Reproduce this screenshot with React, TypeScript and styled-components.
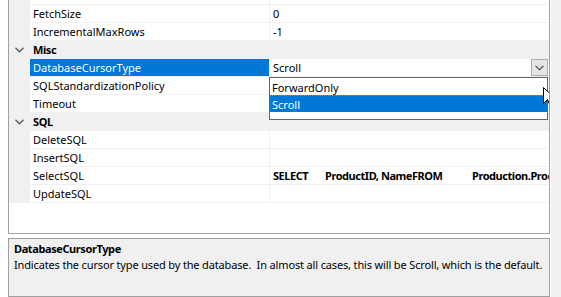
import React from 'react';
import styled, { createGlobalStyle } from 'styled-components';

const GlobalStyle = createGlobalStyle`
  html, body {
    margin: 0;
    padding: 0;
    background: #ffffff;
  }
  body {
    font-family: 'Noto Sans', 'Open Sans', sans-serif;
    font-size: 11px;
    letter-spacing: 0;
    color: #000000;
  }
`;

const Window = styled.div`
  display: flex;
  width: 561px;
  height: 297px;
  overflow: hidden;
  background: #ffffff;
`;

const Content = styled.div`
  display: flex;
  flex-direction: column;
  width: 542px;
  margin-left: 8px;
`;

const RightStrip = styled.div`
  flex: 1;
  margin-left: 1px;
  background: #f0f0f0;
`;

const Grid = styled.div`
  position: relative;
  height: 233px;
  border: 1px solid #a0a0a0;
  border-top: none;
  background: #ffffff;
  overflow: hidden;
`;

const Row = styled.div<{ $category?: boolean; $height?: number }>`
  display: grid;
  grid-template-columns: 21px 240px 1fr;
  height: ${(p) => p.$height ?? 17}px;
  border-bottom: 1px solid #f0f0f0;
  background: ${(p) => (p.$category ? '#f0f0f0' : '#ffffff')};
  line-height: 17px;
`;

const Margin = styled.div`
  display: flex;
  align-items: center;
  justify-content: center;
  background: #f0f0f0;
`;

const NameCell = styled.div<{ $selected?: boolean; $bold?: boolean }>`
  padding-left: 3px;
  white-space: nowrap;
  overflow: hidden;
  font-weight: ${(p) => (p.$bold ? 700 : 400)};
  letter-spacing: ${(p) => (p.$bold ? '-0.4px' : '0')};
  background: ${(p) => (p.$selected ? '#0078d7' : 'transparent')};
  color: ${(p) => (p.$selected ? '#ffffff' : '#000000')};
  border-right: 1px solid ${(p) => (p.$bold ? 'transparent' : '#f0f0f0')};
`;

const ValueCell = styled.div<{ $bold?: boolean }>`
  position: relative;
  display: flex;
  align-items: center;
  padding-left: 3px;
  white-space: pre;
  font-weight: ${(p) => (p.$bold ? 700 : 400)};
  letter-spacing: ${(p) => (p.$bold ? '-0.45px' : '0')};
  min-width: 0;
`;

const ValueText = styled.span`
  flex: 1;
  overflow: hidden;
`;

const DropButton = styled.div`
  display: flex;
  align-items: center;
  justify-content: center;
  width: 15px;
  height: 15px;
  margin-right: 1px;
  background: #e5e5e5;
  border: 1px solid #adadad;
`;

const Popup = styled.div`
  position: absolute;
  top: 18px;
  left: -1px;
  right: 1px;
  height: 41px;
  border: 1px solid #646464;
  background: #ffffff;
  z-index: 2;
`;

const PopupItem = styled.div<{ $selected?: boolean }>`
  height: 17px;
  line-height: 17px;
  padding-left: 2px;
  background: ${(p) => (p.$selected ? '#0078d7' : '#ffffff')};
  color: ${(p) => (p.$selected ? '#ffffff' : '#000000')};
  border-top: 1px dotted ${(p) => (p.$selected ? '#c08040' : 'transparent')};
  box-sizing: border-box;
`;

const SqlPart = styled.span<{ $width?: number }>`
  display: inline-block;
  width: ${(p) => (p.$width ? `${p.$width}px` : 'auto')};
`;

const Cursor = styled.svg`
  position: absolute;
  left: 534px;
  top: 87px;
  z-index: 3;
`;

const Description = styled.div`
  margin-top: 4px;
  height: 55px;
  border: 1px solid #a0a0a0;
  background: #f0f0f0;
  padding: 2px 5px 0;
  line-height: 16px;
  white-space: pre-wrap;
  letter-spacing: -0.15px;
`;

const DescTitle = styled.div`
  font-weight: 700;
  letter-spacing: -0.4px;
`;

const Chevron = () => (
  <svg width="9" height="6" viewBox="0 0 9 6">
    <path d="M0.5 0.8 L4.5 4.8 L8.5 0.8" fill="none" stroke="#5a5a5a" strokeWidth="1.3" />
  </svg>
);

interface Prop {
  name: string;
  value?: React.ReactNode;
  bold?: boolean;
}

const PropRow: React.FC<Prop> = ({ name, value, bold }) => (
  <Row>
    <Margin />
    <NameCell>{name}</NameCell>
    <ValueCell $bold={bold}>{value}</ValueCell>
  </Row>
);

const CategoryRow: React.FC<{ title: string }> = ({ title }) => (
  <Row $category>
    <Margin>
      <Chevron />
    </Margin>
    <NameCell $bold>{title}</NameCell>
    <div />
  </Row>
);

const App: React.FC = () => {
  return (
    <Window>
      <GlobalStyle />
      <Content>
        <Grid>
          <Row $height={4}>
            <Margin />
            <NameCell />
            <div />
          </Row>
          <PropRow name="FetchSize" value="0" />
          <PropRow name="IncrementalMaxRows" value="-1" />
          <CategoryRow title="Misc" />
          <Row>
            <Margin />
            <NameCell $selected>DatabaseCursorType</NameCell>
            <ValueCell>
              <ValueText>Scroll</ValueText>
              <DropButton>
                <svg width="9" height="6" viewBox="0 0 9 6">
                  <path d="M0.5 0.8 L4.5 4.8 L8.5 0.8" fill="none" stroke="#404040" strokeWidth="1.1" />
                </svg>
              </DropButton>
              <Popup>
                <PopupItem>ForwardOnly</PopupItem>
                <PopupItem $selected>Scroll</PopupItem>
              </Popup>
            </ValueCell>
          </Row>
          <PropRow name="SQLStandardizationPolicy" />
          <PropRow name="Timeout" />
          <CategoryRow title="SQL" />
          <PropRow name="DeleteSQL" />
          <PropRow name="InsertSQL" />
          <PropRow
            name="SelectSQL"
            bold
            value={
              <ValueText>
                <SqlPart $width={52}>SELECT</SqlPart>
                <SqlPart $width={147}>ProductID, NameFROM</SqlPart>
                <SqlPart>Production.Product</SqlPart>
              </ValueText>
            }
          />
          <PropRow name="UpdateSQL" />
          <Cursor width="13" height="20" viewBox="0 0 13 20">
            <path
              d="M0.5 0.5 L0.5 16.5 L4.5 12.5 L7.2 18.8 L9.6 17.8 L7 11.5 L12 11.5 Z"
              fill="#ffffff"
              stroke="#000000"
              strokeWidth="1"
              strokeLinejoin="miter"
            />
          </Cursor>
        </Grid>
        <Description>
          <DescTitle>DatabaseCursorType</DescTitle>
          <div>Indicates the cursor type used by the database.  In almost all cases, this will be Scroll, which is the default.</div>
        </Description>
      </Content>
      <RightStrip />
    </Window>
  );
};

export default App;
